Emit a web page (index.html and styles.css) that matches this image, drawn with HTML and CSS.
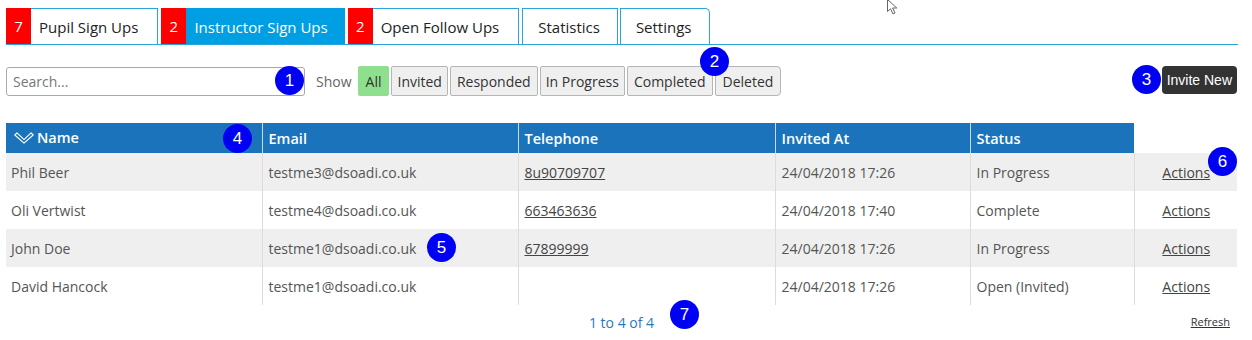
FILE: index.html
```html
<!DOCTYPE html>
<html lang="en">
<head>
<meta charset="utf-8">
<title>Instructor Sign Ups</title>
<link rel="stylesheet" href="styles.css">
</head>
<body>
<div class="page">
  <nav class="tabs">
    <a class="tab"><span class="count">7</span><span class="label">Pupil Sign Ups</span></a>
    <a class="tab active"><span class="count">2</span><span class="label">Instructor Sign Ups</span></a>
    <a class="tab"><span class="count">2</span><span class="label">Open Follow Ups</span></a>
    <a class="tab plain"><span class="label">Statistics</span></a>
    <a class="tab plain last"><span class="label">Settings</span></a>
  </nav>

  <div class="toolbar">
    <input class="search" type="text" placeholder="Search...">
    <span class="show">Show</span>
    <div class="filters">
      <button class="filter on">All</button>
      <button class="filter">Invited</button>
      <button class="filter">Responded</button>
      <button class="filter">In Progress</button>
      <button class="filter">Completed</button>
      <button class="filter">Deleted</button>
    </div>
    <button class="invite">Invite New</button>
  </div>

  <table class="grid">
    <colgroup>
      <col class="c-name"><col class="c-email"><col class="c-tel"><col class="c-inv"><col class="c-status"><col class="c-act">
    </colgroup>
    <thead>
      <tr>
        <th><span class="sort"><svg width="20" height="12" viewBox="0 0 20 12"><path d="M0.8 3 L3 0.8 L10 7.6 L17 0.8 L19.2 3 L10 11.2 Z" fill="none" stroke="#fff" stroke-width="1.1" stroke-linejoin="round"/></svg>Name</span></th>
        <th>Email</th>
        <th>Telephone</th>
        <th>Invited At</th>
        <th>Status</th>
        <th class="blank"></th>
      </tr>
    </thead>
    <tbody>
      <tr class="odd"><td>Phil Beer</td><td>testme3@dsoadi.co.uk</td><td><a class="lnk">8u90709707</a></td><td>24/04/2018 17:26</td><td>In Progress</td><td class="act"><a class="lnk">Actions</a></td></tr>
      <tr><td>Oli Vertwist</td><td>testme4@dsoadi.co.uk</td><td><a class="lnk">663463636</a></td><td>24/04/2018 17:40</td><td>Complete</td><td class="act"><a class="lnk">Actions</a></td></tr>
      <tr class="odd"><td>John Doe</td><td>testme1@dsoadi.co.uk</td><td><a class="lnk">67899999</a></td><td>24/04/2018 17:26</td><td>In Progress</td><td class="act"><a class="lnk">Actions</a></td></tr>
      <tr><td>David Hancock</td><td>testme1@dsoadi.co.uk</td><td></td><td>24/04/2018 17:26</td><td>Open (Invited)</td><td class="act"><a class="lnk">Actions</a></td></tr>
    </tbody>
  </table>

  <div class="footer">
    <span class="pager">1 to 4 of 4</span>
    <a class="refresh">Refresh</a>
  </div>

  <span class="marker m1">1</span>
  <span class="marker m2">2</span>
  <span class="marker m3">3</span>
  <span class="marker m4">4</span>
  <span class="marker m5">5</span>
  <span class="marker m6">6</span>
  <span class="marker m7">7</span>

  <svg class="cursor" width="14" height="17" viewBox="0 0 14 17"><path d="M1.5 0.5 L1.5 12.5 L4.5 9.8 L7 15 L9 14 L6.6 9 L10.8 9 Z" fill="#fff" stroke="#666" stroke-width="1" stroke-linejoin="round"/></svg>
</div>
</body>
</html>
```

FILE: styles.css
```css
* { box-sizing: border-box; }
html, body { margin: 0; padding: 0; background: #fff; }
body { font-family: "Open Sans", "Noto Sans", sans-serif; color: #555; }

.page {
  position: relative;
  width: 1252px;
  height: 340px;
  padding: 8px 0 0 6px;
}

/* tabs */
.tabs {
  display: flex;
  align-items: flex-end;
  gap: 3px;
  width: 1232px;
  border-bottom: 1px solid #29a4df;
  height: 37px;
}
.tab {
  display: flex;
  align-items: stretch;
  height: 36px;
  border: 1px solid #29a4df;
  border-bottom: none;
  background: #fff;
  color: #222;
  font-size: 15px;
  text-decoration: none;
}
.tab .count {
  width: 25px;
  margin: -1px 0 0 -1px;
  background: #ff0000;
  color: #fff;
  display: flex;
  align-items: center;
  justify-content: center;
  font-size: 15px;
}
.tab .label {
  display: flex;
  align-items: center;
  padding: 0 19px 0 8px;
}
.tab.active .label { padding-right: 16px; }
.tab.plain .label { padding: 0 17px 0 15px; }
.tab.active { background: #009ee2; color: #fff; border-color: #009ee2; }
.tab.last { border-top-right-radius: 5px; margin-left: -1px; }

/* toolbar */
.toolbar {
  display: flex;
  align-items: center;
  margin-top: 21px;
  width: 1231px;
  height: 30px;
}
.search {
  width: 299px;
  height: 29px;
  border: 1px solid #a9a9a9;
  border-radius: 3px;
  padding: 0 6px;
  font-family: inherit;
  font-size: 14px;
  color: #555;
  outline: none;
}
.search::placeholder { color: #777; }
.show { margin-left: 11px; font-size: 14px; color: #666; }
.filters { display: flex; gap: 2px; margin-left: 6px; }
.filter {
  height: 30px;
  padding: 0 6px;
  border: 1px solid #b5b5b5;
  border-radius: 2px;
  background: #efefef;
  font-family: inherit;
  font-size: 14px;
  color: #333;
}
.filter.on { background: #8ee08e; border-color: #8ee08e; padding: 0 7px; }
.filter:nth-child(2) { padding: 0 5px; }
.filter:nth-child(4) { padding: 0 5px; }
.filter:last-child { border-radius: 2px 4px 4px 2px; padding: 0 7px; }
.invite {
  margin-left: auto;
  height: 28px;
  padding: 0 5px;
  margin-top: -2px;
  border: none;
  border-radius: 4px;
  background: #333;
  color: #fff;
  font-family: "Liberation Sans", Arial, sans-serif;
  font-size: 14px;
}

/* table */
.grid {
  margin-top: 27px;
  width: 1231px;
  border-collapse: collapse;
  table-layout: fixed;
  font-size: 14px;
}
.c-name { width: 256px; }
.c-email { width: 256px; }
.c-tel { width: 257px; }
.c-inv { width: 195px; }
.c-status { width: 164px; }
.c-act { width: 103px; }
.grid th {
  height: 30px;
  background: #1b74bb;
  color: #fff;
  font-weight: 600;
  font-size: 14.5px;
  text-align: left;
  padding: 0 6px;
  border-left: 1px solid #c9dcee;
}
.grid th:first-child { border-left: none; padding-left: 8px; }
.grid th.blank { background: #fff; border-left: 1px solid #fff; }
.sort { display: inline-flex; align-items: center; gap: 3px; }
.grid td {
  height: 38px;
  padding: 0 6px;
  border-left: 1px solid #dcdcdc;
  color: #555;
  white-space: nowrap;
}
.grid td:first-child { border-left: none; padding-left: 5px; }
.grid tr.odd td { background: #efefef; }
.grid td.act { text-align: center; padding: 0 0 0 1px; }
.lnk { color: #444; text-decoration: underline; }

/* footer */
.footer {
  position: relative;
  width: 1231px;
  display: flex;
  justify-content: center;
  padding-top: 8px;
}
.pager { color: #2a79bd; font-size: 14px; line-height: 20px; }
.refresh {
  position: absolute;
  right: 7px;
  top: 9px;
  font-size: 11px;
  color: #333;
  text-decoration: underline;
}

/* annotation markers */
.marker {
  position: absolute;
  width: 29px;
  height: 29px;
  border-radius: 50%;
  background: #0000f5;
  color: #fff;
  font-family: "Liberation Sans", Arial, sans-serif;
  font-size: 17px;
  display: flex;
  align-items: center;
  justify-content: center;
}
.m1 { left: 275px; top: 66px; }
.m2 { left: 700px; top: 47px; }
.m3 { left: 1132px; top: 65px; }
.m4 { left: 223px; top: 124px; }
.m5 { left: 427px; top: 233px; }
.m6 { left: 1208px; top: 147px; }
.m7 { left: 670px; top: 300px; }

.cursor { position: absolute; left: 886px; top: -1px; }
```
